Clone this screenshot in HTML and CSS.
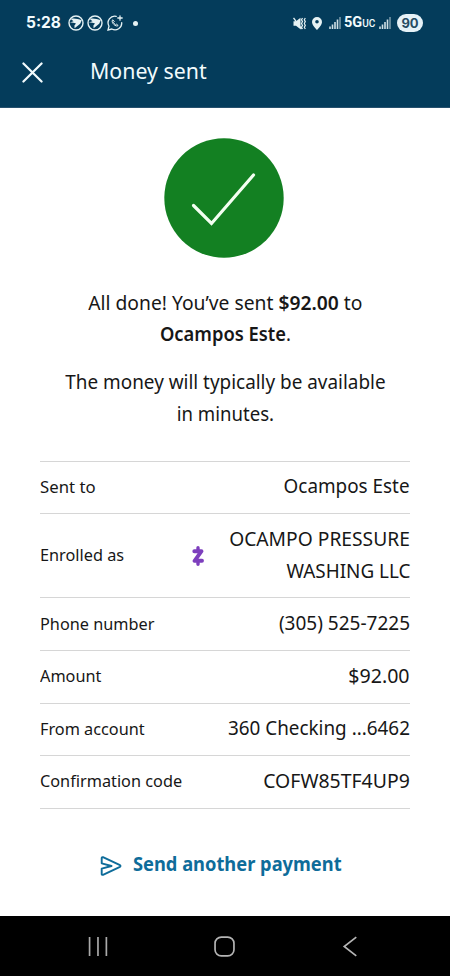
FILE: index.html
```html
<!DOCTYPE html>
<html lang="en">
<head>
<meta charset="utf-8">
<title>Money sent</title>
<link rel="stylesheet" href="styles.css">
</head>
<body>
<header class="top">
  <div class="status">
    <div class="status-left">
      <span class="time">5:28</span>
      <svg class="app" viewBox="0 0 16 16"><circle cx="8" cy="8" r="7" fill="none" stroke="#e6f2f4" stroke-width="1.400"/><path d="M2.500 3.800C6 3 10 3.800 13.800 5.200L12.200 8.800 6.600 13.200 6.400 10.600 8 8.600C6 7.600 4.200 7.600 1.800 7.600L5.500 6.200Z" fill="#e6f2f4"/></svg>
      <svg class="app" viewBox="0 0 16 16"><circle cx="8" cy="8" r="7" fill="none" stroke="#e6f2f4" stroke-width="1.400"/><path d="M2.500 3.800C6 3 10 3.800 13.800 5.200L12.200 8.800 6.600 13.200 6.400 10.600 8 8.600C6 7.600 4.200 7.600 1.800 7.600L5.500 6.200Z" fill="#e6f2f4"/></svg>
      <svg class="app" viewBox="0 0 16 16" fill="none" stroke="#e6f2f4" stroke-width="1.300" stroke-linecap="round"><path d="M9.200 1.300A6.700 6.700 0 0 0 2 11.200L1 15l3.800-1A6.700 6.700 0 0 0 14.700 7.600M13 .8v4.400M10.800 3h4.400"/><path d="M5.400 5.100c-1 1.200.2 3.200 1.500 4.400s3.200 2.100 4.300 1l-1.700-1.300-1 .6C7.700 9.300 7 8.500 6.500 7.500l.6-.8z" stroke-width="1"/></svg>
      <span class="dot"></span>
    </div>
    <div class="status-right">
      <svg class="mute" viewBox="0 0 13 13"><path d="M.5 4.200h2.500L7.500.8v11.400L3 8.800H.5z" fill="#e6f2f4"/><path d="M.5.8L8.500 12" stroke="#e6f2f4" stroke-width="1.400"/><path d="M9.500 1l-1 1.800 1 1.800-1 1.900 1 1.900-1 1.800 1 1.800M12.300 1l-1 1.800 1 1.800-1 1.900 1 1.900-1 1.800 1 1.800" fill="none" stroke="#e6f2f4" stroke-width="1.200"/></svg>
      <svg class="pin" viewBox="0 0 10 13"><path fill-rule="evenodd" d="M5 0a5 5 0 0 0-5 5c0 3.400 5 8 5 8s5-4.600 5-8a5 5 0 0 0-5-5zm0 3a1.800 1.800 0 1 1 0 3.600A1.800 1.800 0 0 1 5 3z" fill="#e6f2f4"/></svg>
      <svg class="signal" viewBox="0 0 12 12"><path d="M1 9.500V12M3.500 7.500V12M6 5V12M8.500 2.500V12" stroke="#cfdfe5" stroke-width="1.600"/><path d="M11 0V12" stroke="#7898a9" stroke-width="1.600"/></svg>
      <span class="net">5G<small>UC</small></span>
      <svg class="signal two" viewBox="0 0 12 12"><path d="M1 9.500V12M3.500 7.500V12M6 5V12M8.500 2.500V12" stroke="#cfdfe5" stroke-width="1.600"/><path d="M11 0V12" stroke="#7898a9" stroke-width="1.600"/></svg>
      <span class="battery">90</span>
    </div>
  </div>
  <div class="bar">
    <svg class="close" viewBox="0 0 22 22"><path d="M1.500 1.500l19 19M20.500 1.500l-19 19" stroke="#f2fbfd" stroke-width="2.300" stroke-linecap="round"/></svg>
    <h1>Money sent</h1>
  </div>
</header>
<main>
  <svg class="badge" viewBox="0 0 120 120"><circle cx="60" cy="60" r="59.700" fill="#138022"/><path d="M29.500 67.500L47.500 85.500L89.500 37" fill="none" stroke="#f4fff2" stroke-width="3.200" stroke-linecap="round"/></svg>
  <p class="message"><span class="fit sent">All done! You’ve sent <b>$92.00</b> to</span><br><span class="fit recipient"><b>Ocampos Este</b>.</span></p>
  <p class="message note"><span class="fit timing">The money will typically be available</span><br><span class="fit minutes">in minutes.</span></p>
  <dl>
    <div class="row"><dt class="wide">Sent to</dt><dd><span class="fit">Ocampos Este</span></dd></div>
    <div class="row enrolled"><dt>Enrolled as</dt><svg class="zelle" viewBox="0 0 12 20"><path d="M6 1.800v2.500M6 15.500v2.700" fill="none" stroke="#7d3fbd" stroke-width="3.400" stroke-linecap="round"/><path d="M2.300 5.200h7.200L2.600 14.800H10" fill="none" stroke="#7d3fbd" stroke-width="3.900" stroke-linejoin="round" stroke-linecap="round"/></svg><dd><span class="fit business">OCAMPO PRESSURE</span><br><span class="fit">WASHING LLC</span></dd></div>
    <div class="row"><dt>Phone number</dt><dd><span class="fit phone">(305) 525-7225</span></dd></div>
    <div class="row"><dt>Amount</dt><dd><span class="fit amount">$92.00</span></dd></div>
    <div class="row"><dt>From account</dt><dd><span class="fit">360 Checking ...6462</span></dd></div>
    <div class="row"><dt>Confirmation code</dt><dd><span class="fit code">COFW85TF4UP9</span></dd></div>
  </dl>
  <a class="again"><svg viewBox="0 0 22 20"><path d="M3 1.200Q1.700 .8 1.700 2V7.300L11.500 10 1.700 12.700V18Q1.700 19.200 3 18.800L20 10.800Q21 10 20 9.200Z" fill="none" stroke="#0e6c9a" stroke-width="1.900" stroke-linejoin="round"/></svg><span class="fit">Send another payment</span></a>
</main>
<nav>
  <svg viewBox="0 0 20 20"><path d="M1.500 1v18M9.500 1v18M17.500 1v18" stroke="#aaa" stroke-width="1.600"/></svg>
  <svg viewBox="0 0 20 20"><rect x="1" y="1" width="18" height="18" rx="6" fill="none" stroke="#b5b5b5" stroke-width="1.600"/></svg>
  <svg viewBox="0 0 20 20"><path d="M15.500 1L4 10l11.500 9" fill="none" stroke="#b5b5b5" stroke-width="1.600"/></svg>
</nav>
</body>
</html>
```
FILE: styles.css
```css
* { box-sizing: border-box; }
body { margin: 0; height: 976px; display: flex; flex-direction: column; background: #fff; color: #171717; font-family: "Noto Sans", sans-serif; overflow: hidden; }
.top { height: 108px; background: #043c5b; color: #f2fbfd; border-bottom: 1px solid #27516e; flex: none; }
.status { height: 46px; padding: 0 27px 0 26px; display: flex; justify-content: space-between; align-items: center; }
.status-left, .status-right { display: flex; align-items: center; }
.time { font: 700 15.500px/20px Inter, sans-serif; width: 41.500px; }
.app { width: 16px; height: 16px; margin-right: 3.500px; }
.dot { width: 5px; height: 5px; border-radius: 50%; background: #e6f2f4; margin-left: 6.500px; }
.mute { width: 13px; height: 13px; }
.pin { width: 10px; height: 13px; margin-left: 6px; }
.signal { width: 12px; height: 12px; margin: 0 3px 0 7px; }
.net { font: 700 14.500px/20px Roboto, sans-serif; width: 31.500px; white-space: nowrap; }
.net small { font-size: 10px; font-weight: 500; }
.signal.two { margin: 0 6px 0 3.500px; }
.battery { width: 26px; height: 18px; border-radius: 9px; background: #e6f2f8; color: #274b63; font: 700 13px/18px Inter, sans-serif; text-align: center; }
.bar { display: flex; align-items: center; height: 53px; padding-left: 22px; }
.close { width: 21px; height: 21px; }
h1 { margin: 0 0 5px 47px; font-size: 22px; font-weight: 400; line-height: 30px; transform: scaleX(.97); transform-origin: left; }
main { flex: 1; padding: 30px 40px 0; display: flex; flex-direction: column; align-items: center; }
.badge { width: 120px; height: 120px; flex: none; margin-right: 1.500px; }
.message { margin: 28.500px 0 0; font-size: 20px; line-height: 31.700px; text-align: center; white-space: nowrap; }
.message.note { margin-top: 16px; }
.message b { font-weight: 600; }
.fit { display: inline-block; vertical-align: top; }
.sent { transform: scaleX(.963); }
.recipient { transform: scaleX(.917); }
.timing { transform: scaleX(.945); }
.minutes { transform: scaleX(.93); }
dl { width: 370px; margin: 31.400px 0 0; border-top: 1px solid #d6d6d6; }
.row { display: flex; align-items: center; height: 52.600px; padding-bottom: 2.500px; border-bottom: 1px solid #d6d6d6; }
.enrolled { height: 84.200px; }
dt { font-size: 17px; white-space: nowrap; transform: scaleX(.957); transform-origin: left; }
dt.wide { transform: scaleX(.985); }
dd { margin: 0 0 0 auto; font-size: 20px; line-height: 31.700px; text-align: right; white-space: nowrap; }
dd .fit { transform: scaleX(.943); transform-origin: right; }
dd .business { transform: scaleX(.962); }
dd .phone { transform: scaleX(.95); }
dd .amount { transform: scaleX(.98); }
dd .code { transform: scaleX(.972); }
.zelle { width: 12px; height: 20px; margin: 3px 0 0 64px; }
.again { display: flex; align-items: center; align-self: flex-start; margin: 40.500px 0 0 60px; color: #0e6c9a; font-size: 20px; font-weight: 700; line-height: 30px; white-space: nowrap; }
.again svg { width: 22px; height: 20px; margin: 3px 11px 0 0; }
.again .fit { transform: scaleX(.914); transform-origin: left; }
nav { height: 60px; flex: none; background: #000; display: flex; justify-content: space-between; align-items: center; padding: 0 89px 0 88px; }
nav svg { width: 21px; height: 21px; }
```
